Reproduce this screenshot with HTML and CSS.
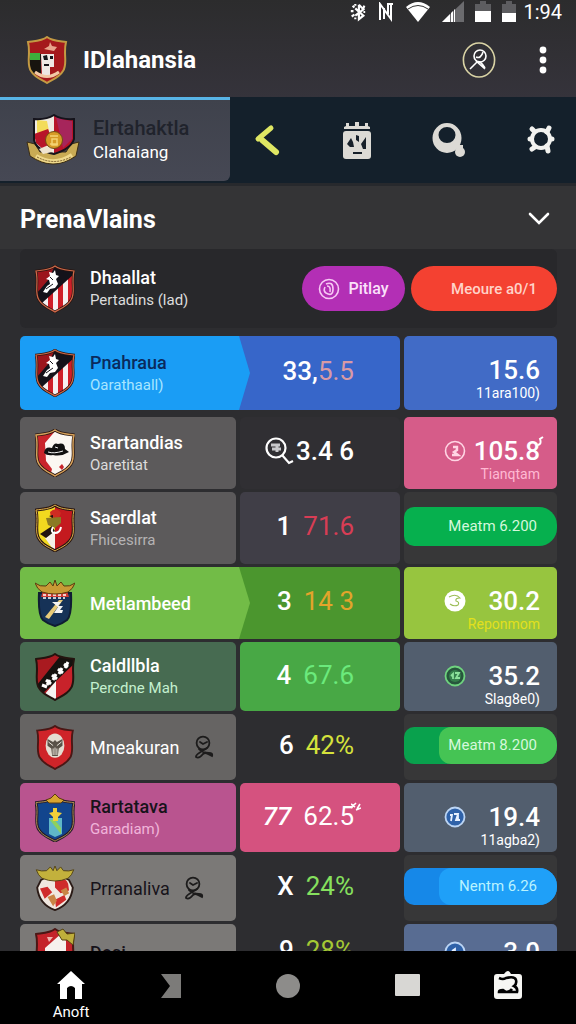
FILE: index.html
```html
<!DOCTYPE html>
<html lang="en">
<head>
    <meta charset="UTF-8">
    <meta name="viewport" content="width=device-width, initial-scale=1.0">
    <title>IDlahansia</title>
    <link rel="stylesheet" href="styles.css">
</head>
<body>
    <!-- Shared shapes -->
    <svg class="defs" aria-hidden="true">
        <defs>
            <path id="shield" d="M20 1 C15 5 8 5 1 6 C4 18 -1 28 4 35 C8 42 16 44 20 47 C24 44 32 42 36 35 C41 28 36 18 39 6 C32 5 25 5 20 1 Z"/>
            <clipPath id="shieldClip"><use href="#shield"/></clipPath>
            <symbol id="person" viewBox="0 0 20 24">
                <g fill="none" stroke="currentColor" stroke-width="1.8" stroke-linecap="round">
                    <circle cx="9" cy="8" r="6.4"/>
                    <path d="M6 7l3 2 4-2M13 13C9 16 1 19 2 22q3 2 7-3 2-2 5 0l4 2q1-3-3-3-6 0-10-4"/>
                </g>
            </symbol>
            <symbol id="striped" viewBox="0 0 40 48">
                <g clip-path="url(#shieldClip)">
                    <path fill="#f6f0f0" d="M0 0h40v48H0z"/>
                    <path fill="#cf1f28" d="M13 20h5v28h-5zM23 14h5v34h-5zM33 8h6v40h-6z"/>
                    <path fill="#14121a" d="M0 0h40v8L7 38H0z"/>
                    <path fill="#9c151c" d="M0 0h20L14 14 2 28z"/>
                    <path fill="#fff" d="M8 27l4-6 3-2-1-4-3-1 4-3-1-4 4 1 2-3 1 5 3 1-3 3 2 5-3 4-5 1-3 4z"/>
                    <path stroke="#14121a" d="M11 24l7-5M15 12l3 3" fill="none"/>
                </g>
                <use href="#shield" fill="none" stroke="#2a1410" stroke-width="2.6"/>
                <use href="#shield" fill="none" stroke="#cf6a4a" stroke-width="1.2"/>
            </symbol>
        </defs>
    </svg>

    <header class="top">
        <div class="status-bar">
            <svg width="18" height="22" viewBox="0 0 20 22" fill="none" stroke="#fff" stroke-width="2.4"><path d="M11 3v16l5-4-9-8m0 8l9-7-5-5M4 4l2 2M2 10h3M3 16l3-2M17 4l-1 3M18 11h-2M7 2v2M7 19v-2"/></svg>
            <svg width="16" height="20" viewBox="0 0 16 20" fill="none" stroke="#fff" stroke-width="2"><path d="M2 18V2l11 15V2M6 17V6M10 12V2l5 0"/></svg>
            <svg width="26" height="22" viewBox="0 0 26 22"><path fill="#fff" d="M1 6Q13-4 25 6L13 21z"/><path fill="none" stroke="#333" stroke-width="1" d="M3 8q10-7 20 0"/></svg>
            <svg width="22" height="22" viewBox="0 0 22 22"><path fill="#6b6b6e" d="M0 21L22 0v21z"/><path fill="#fff" d="M0 21L8 13v8zM9 12l2-2v11H9zM12 9l1-1v13h-1z"/></svg>
            <svg width="16" height="22" viewBox="0 0 16 22"><path fill="#5d5d60" d="M0 3h5V0h6v3h5v18H0z"/><path fill="#fff" d="M0 10h16v11H0z"/></svg>
            <svg width="14" height="22" viewBox="0 0 14 22"><path fill="#5d5d60" d="M0 3h4V0h6v3h4v18H0z"/><path fill="#fff" d="M0 12h14v9H0z"/></svg>
            <span class="clock">1:94</span>
        </div>
        <div class="title-bar">
            <svg class="logo" viewBox="0 0 44 48">
                <g transform="translate(2)">
                    <g clip-path="url(#shieldClip)">
                        <path fill="#a5191c" d="M0 0h40v48H0z"/>
                        <path fill="#17140f" d="M0 18h14v20H0z"/>
                        <path fill="#3fae3c" d="M2 17h11v7H3z"/>
                        <path fill="#eee9e4" d="M14 18h13v13h-4v8h-8z"/>
                        <path fill="#16151a" d="M16 20l4-1 1 5-4 0zM23 20h3v3h-3zM17 28h5v2h-5z"/>
                        <path fill="#e9a58c" d="M17 13l5-3 1-4 2 4 5 1-3 4z"/>
                        <path stroke="#f3c9a5" stroke-width="3" fill="none" d="M8 36q12 9 24 0"/>
                    </g>
                    <use href="#shield" fill="none" stroke="#c39a43" stroke-width="2"/>
                </g>
            </svg>
            <h1>IDlahansia</h1>
            <button class="icon-btn" aria-label="Profile">
                <svg width="34" height="36" viewBox="0 0 34 36" fill="none" stroke="#fff" stroke-width="1.6"><ellipse cx="17" cy="18" rx="15.6" ry="17" stroke="#d9d3a5"/><circle cx="18" cy="14" r="6"/><path d="M14 15q5 2 7-5M8 27l7-7q3-2 8 6M14 19l9 8"/></svg>
            </button>
            <button class="icon-btn more" aria-label="More">
                <svg width="8" height="28" viewBox="0 0 8 28" fill="#fff"><circle cx="4" cy="4" r="3.4"/><circle cx="4" cy="14" r="3.4"/><circle cx="4" cy="24" r="3.4"/></svg>
            </button>
        </div>
    </header>

    <nav class="tabs">
        <a class="tab" href="#">
            <svg class="tab-crest" viewBox="0 0 54 52">
                <path fill="#c9ab54" stroke="#3a2c14" d="M1 28l8 2 5 8 26 0 5-8 8-2-3 14q-23 16-46 0z"/>
                <path fill="#f0ebe2" d="M8 5q12 1 20-4v38Q12 38 8 26z"/>
                <path fill="#f3dc5a" d="M11 6l10 1 2 10-12 3z"/>
                <path fill="#b81429" d="M28 1q8 5 20 4v20q-3 12-20 14zM8 20l14-5 5 12-8 10-9-8z"/>
                <path fill="#a6255b" d="M30 3q7 3 16 4v18l-9 9z"/>
                <path fill="none" stroke="#15131b" stroke-width="2" d="M8 5q12 1 20-4 8 5 20 4v20q-3 10-20 15Q10 36 8 26z"/>
                <path fill="#efe4cf" d="M13 35l12-5 1 8-9 2z"/>
                <circle cx="28" cy="26" r="8.5" fill="#d79b26" stroke="#714b12"/>
                <path fill="none" stroke="#f5d472" stroke-width="1.5" d="M24 22h8M26 25h5v6h-5zM24 30h8"/>
                <path fill="none" stroke="#efd98c" stroke-width="4" d="M10 42q18 11 36-1"/>
                <path fill="none" stroke="#765b2a" stroke-dasharray="2 1" d="M11 43q17 9 34 0"/>
            </svg>
            <span class="tab-text">
                <span class="tab-name">Elrtahaktla</span>
                <span class="tab-sub">Clahaiang</span>
            </span>
        </a>
        <div class="tools">
            <button class="icon-btn" aria-label="Back">
                <svg width="28" height="32" viewBox="0 0 28 32" fill="none" stroke="#dfe763" stroke-width="5" stroke-linecap="round"><path d="M18 4L5 15"/><path d="M9 16l14 12" stroke-width="6"/></svg>
            </button>
            <button class="icon-btn" aria-label="Calendar">
                <svg width="28" height="38" viewBox="0 0 28 38"><path fill="#dcdad5" d="M1 8V6l2-1V2h3v3h6V1h4v4h6V2h3v3l2 1v2z"/><rect y="10" width="28" height="28" rx="3" fill="#dcdad5"/><path fill="#17202a" d="M4 23l4-6 2 4 1 5H7zM13 14l3 1 0 6-3-2zM18 23l5-7v12h-3zM10 31h9v2h-9z"/></svg>
            </button>
            <button class="icon-btn" aria-label="Search">
                <svg width="34" height="36" viewBox="0 0 34 36"><path fill="#dcdad5" fill-rule="evenodd" d="M15 1a14.5 15 0 1 0 0 30a14.5 15 0 1 0 0-30zM15 5a8.500 8 0 1 1 0 16a8.500 8 0 1 1 0-16z"/><path d="M28 23v6" stroke="#dcdad5" stroke-width="6"/><circle cx="28" cy="30" r="5" fill="#dcdad5"/></svg>
            </button>
            <button class="icon-btn" aria-label="Settings">
                <svg width="28" height="32" viewBox="0 0 28 32"><g fill="none" stroke="#f2f2ef"><circle cx="14" cy="15" r="9" stroke-width="4"/><path stroke-width="5" stroke-linecap="round" d="M7 7L5 5M20 8l2-4M24 15h1M20 22l1 5M8 23l-3 2M4 15H3"/></g></svg>
            </button>
        </div>
    </nav>

    <main>
        <div class="section-head">
            <h2>PrenaVlains</h2>
            <button class="icon-btn" aria-label="Collapse">
                <svg width="22" height="14" viewBox="0 0 22 14" fill="none" stroke="#fff" stroke-width="2.600" stroke-linecap="round"><path d="M2 2l9 9 9-9"/></svg>
            </button>
        </div>

        <div class="feature">
            <div class="team">
                <svg class="crest"><use href="#striped"/></svg>
                <div><div class="name">Dhaallat</div><div class="sub">Pertadins (lad)</div></div>
            </div>
            <button class="round purple">
                <svg width="22" height="22" viewBox="0 0 22 22" fill="none" stroke="#f7c9f5" stroke-width="1.600"><circle cx="11" cy="11" r="9.500"/><path d="M8 6q7-3 7 5t-7 4q-3-2-1-6M9 8q4 0 3 6"/></svg>
                Pitlay
            </button>
            <button class="round red">Meoure a0/1</button>
        </div>

        <table class="standings">
            <tbody>
                <tr class="first">
                    <td class="team arrow blue">
                        <svg class="crest"><use href="#striped"/></svg>
                        <div><div class="name navy">Pnahraua</div><div class="sub ice">Oarathaall)</div></div>
                    </td>
                    <td class="score joined royal tight"><span>33,</span><span class="salmon">5.5</span></td>
                    <td class="total royal-light">
                        <div class="line"><b>15.6</b></div>
                        <div class="note">11ara100)</div>
                    </td>
                </tr>
                <tr>
                    <td class="team grey">
                        <svg class="crest" viewBox="0 0 40 48">
                            <g clip-path="url(#shieldClip)">
                                <path fill="#fbf7f2" d="M0 0h40v48H0z"/>
                                <path fill="#c9252b" d="M0 0h22L10 14l1 18 6 8-2 8H0z"/>
                                <path fill="#111" d="M9 24q1-7 8-5 2-6 6-4 7-2 7 5l4 3q-8 5-16 3-6 1-9-2z"/>
                                <path stroke="#f5f5f5" fill="none" d="M13 23q6 2 15-1M20 18l3 1"/>
                                <path fill="#c9252b" d="M24 38l3-3 2 3-2 3z"/>
                            </g>
                            <use href="#shield" fill="none" stroke="#2a1712" stroke-width="3"/>
                            <use href="#shield" fill="none" stroke="#d6a25b" stroke-width="1.500"/>
                        </svg>
                        <div><div class="name">Srartandias</div><div class="sub">Oaretitat</div></div>
                    </td>
                    <td class="score dark tight">
                        <svg width="32" height="32" viewBox="0 0 32 32" fill="none" stroke="#fff" stroke-width="2.200"><circle cx="12" cy="13" r="9.500"/><path d="M18 20l7 8 4-2"/><path stroke-width="3" d="M7 10l9 0M8 14h9M13 10v7" stroke="#c9c9cc"/></svg>
                        <span>3.4 6</span>
                    </td>
                    <td class="total pink">
                        <div class="line">
                            <svg class="badge" viewBox="0 0 22 22" fill="none" stroke="#ffd5e4" stroke-width="1.600"><circle cx="11" cy="11" r="9.500"/><path stroke-width="2.400" d="M9 7h4v3l-3 2 4 3H8"/></svg>
                            <b>105.8<svg class="mark" viewBox="0 0 10 10"><path fill="none" stroke="#fff" stroke-width="2" d="M1 9q4-1 2-6l3-2"/></svg></b>
                        </div>
                        <div class="note rose">Tianqtam</div>
                    </td>
                </tr>
                <tr>
                    <td class="team grey">
                        <svg class="crest" viewBox="0 0 40 48">
                            <g clip-path="url(#shieldClip)">
                                <path fill="#f2d91f" d="M0 0h20v48H0z"/>
                                <path fill="#c41a1f" d="M20 0h20v48H20z"/>
                                <path fill="#f5f0e8" d="M10 34l10-8v22z"/>
                                <path fill="#cf2c22" d="M15 8q6-6 11 1l-2 5h-8z"/>
                                <path fill="#8b7a24" d="M11 14l15-1 0 6-6 5-7-3z"/>
                                <path fill="#21140f" d="M5 30l12-8 3 5-9 7zM14 12l4-1 0 3z"/>
                                <path fill="none" stroke="#fff" stroke-width="2" d="M18 23q-3 6 2 6t6-6"/>
                            </g>
                            <use href="#shield" fill="none" stroke="#2a1712" stroke-width="3"/>
                            <use href="#shield" fill="none" stroke="#e0b14b" stroke-width="1"/>
                        </svg>
                        <div><div class="name">Saerdlat</div><div class="sub muted">Fhicesirra</div></div>
                    </td>
                    <td class="score slate"><span>1</span><span class="crimson">71.6</span></td>
                    <td class="action"><button class="pill green">Meatm 6.200</button></td>
                </tr>
                <tr>
                    <td class="team arrow lime">
                        <svg class="crest" viewBox="0 0 40 48">
                            <path fill="#163257" stroke="#101d33" stroke-width="2" d="M4 14h32q1 22-4 27-5 4-12 6-7-2-12-6-5-5-4-27z"/>
                            <path fill="#cf3a33" d="M8 12h24l2 6H6z"/>
                            <path stroke="#fff" stroke-width="1.500" stroke-dasharray="3 2" d="M8 16h24M8 19h22"/>
                            <path fill="#e8cb79" d="M10 38l14-17 4 0-14 19z"/>
                            <path fill="#f4f4f4" d="M17 23h9l-3 4h5l-3 4h3l-1 3h-8l4-6z"/>
                            <path fill="#c89a35" stroke="#5a3a10" d="M0 4q5 4 11 3l4-4 3 4 2-6 2 6 4-4 3 4q6 1 11-3-2 6-7 9-13 4-26 0-5-3-7-9z"/>
                        </svg>
                        <div class="name">Metlambeed</div>
                    </td>
                    <td class="score joined leaf"><span>3</span><span class="amber">14 3</span></td>
                    <td class="total yellow-green">
                        <div class="line">
                            <svg class="badge" viewBox="0 0 22 22"><circle cx="11" cy="11" r="10.500" fill="#fff"/><path fill="none" stroke="#9bbd55" stroke-width="1.100" d="M5 7q7-4 11 1-5 0-4 3 4 1 2 4-4 2-8-1"/></svg>
                            <b>30.2</b>
                        </div>
                        <div class="note gold">Reponmom</div>
                    </td>
                </tr>
                <tr class="mid">
                    <td class="team moss">
                        <svg class="crest" viewBox="0 0 40 48">
                            <g clip-path="url(#shieldClip)">
                                <path fill="#a91a20" d="M0 0h40v48H0z"/>
                                <path fill="#15120f" d="M26 2h14v10L8 40 2 32z"/>
                                <path fill="#f8f4f2" d="M21 28v20L9 42z"/>
                                <path fill="#c8222a" d="M21 28l19-18v38H21z"/>
                                <path fill="none" stroke="#fff" stroke-width="3" d="M7 32l5 2M11 27l5 4M12 32l3-5M17 22l5 4M18 27l3-6M23 16l5 4M24 21l3-6M29 11l4 3M30 15l3-6"/>
                            </g>
                            <use href="#shield" fill="none" stroke="#24140f" stroke-width="2"/>
                        </svg>
                        <div><div class="name">Caldllbla</div><div class="sub mint">Percdne Mah</div></div>
                    </td>
                    <td class="score emerald"><span>4</span><span class="aqua">67.6</span></td>
                    <td class="total steel">
                        <div class="line">
                            <svg class="badge" viewBox="0 0 22 22"><circle cx="11" cy="11" r="9.500" fill="#27563c" stroke="#6fd37f" stroke-width="1.800"/><circle cx="11" cy="11" r="6" fill="#357f4c"/><path fill="none" stroke="#8be09a" stroke-width="1.800" d="M7 11l2-2v5M11 8h4l-3 5h4"/></svg>
                            <b>35.2</b>
                        </div>
                        <div class="note">Slag8e0)</div>
                    </td>
                </tr>
                <tr class="short">
                    <td class="team stone">
                        <svg class="crest small" viewBox="0 0 40 48">
                            <use href="#shield" fill="#cf2429" stroke="#4a1715" stroke-width="2"/>
                            <ellipse cx="20" cy="22" rx="10" ry="13" fill="#e4ddd2"/>
                            <path fill="#5a5248" d="M12 15l6 3 2-2 2 2 6-3v7l-4 3-1 8h-6l-1-8-4-3z"/>
                            <path stroke="#efe9df" d="M13 18l5 4M27 18l-5 4M18 25v7M20 24v8M22 25v7"/>
                        </svg>
                        <div class="name thin">Mneakuran</div>
                        <svg class="person"><use href="#person"/></svg>
                    </td>
                    <td class="score"><span>6</span><span class="lemon">42%</span></td>
                    <td class="action"><button class="pill split green"><span>Meatm 8.200</span></button></td>
                </tr>
                <tr class="mid">
                    <td class="team magenta">
                        <svg class="crest" viewBox="0 0 40 48">
                            <g transform="translate(0 3) scale(1 .94)">
                                <use href="#shield" fill="#12458d" stroke="#231a2b" stroke-width="3"/>
                                <use href="#shield" fill="none" stroke="#b1914f" stroke-width="1"/>
                            </g>
                            <path fill="#d9a52f" stroke="#5a3a10" d="M11 6l5-2 4-4 4 4 5 2-3 3H14z"/>
                            <path fill="#5fb7c8" d="M14 24h13v16l-7 3-6-3z"/>
                            <path fill="#8ed15c" d="M15 26h5l6 8v6z"/>
                            <path fill="#f0cf39" d="M18 14h4v4l5 1-4 4v4h-5v-4l-4-4 4-1z"/>
                        </svg>
                        <div><div class="name black">Rartatava</div><div class="sub blush">Garadiam)</div></div>
                    </td>
                    <td class="score rose-bg"><span class="slant">77</span><span>62.5<svg class="mark" viewBox="0 0 10 10"><path fill="none" stroke="#fff" stroke-width="1.600" d="M0 3l4 3M0 7l5-5M9 3L6 8M5 9l5-2"/></svg></span></td>
                    <td class="total steel">
                        <div class="line">
                            <svg class="badge" viewBox="0 0 22 22"><circle cx="11" cy="11" r="9.500" fill="#2f62a9" stroke="#bcd5f4" stroke-width="1.800"/><path fill="none" stroke="#e6f0ff" stroke-width="1.800" d="M6 9l2 0-1 6M10 8h4l-2 6h4M14 8v6"/></svg>
                            <b>19.4</b>
                        </div>
                        <div class="note">11agba2)</div>
                    </td>
                </tr>
                <tr class="short">
                    <td class="team ash">
                        <svg class="crest small" viewBox="0 0 40 48">
                            <path fill="#f0e7df" stroke="#2b1b16" stroke-width="2" d="M5 15q15-9 30 0l4 8q-2 18-19 24Q3 41 1 23z"/>
                            <path fill="#cf2b2b" d="M20 14q11-3 14 5l1 7-9 3-6-6zM4 24l8-2 5 6-8 7zM20 36l10-5 2 5-11 8z"/>
                            <path fill="#c98545" d="M12 33l7-3 3 7-4 6zM26 26l6-3 3 6-5 3z"/>
                            <path fill="#c3b13c" stroke="#534313" d="M0 4q6 2 11 1l4-4 3 4 2-5 2 5 4-4 3 4q6 1 11-1-2 6-6 9-14 6-28 0-4-3-6-9z"/>
                        </svg>
                        <div class="name black thin">Prranaliva</div>
                        <svg class="person"><use href="#person"/></svg>
                    </td>
                    <td class="score"><span>X</span><span class="spring">24%</span></td>
                    <td class="action"><button class="pill split azure"><span>Nentm 6.26</span></button></td>
                </tr>
                <tr class="last">
                    <td class="team ash">
                        <svg class="crest" viewBox="0 0 40 48">
                            <g clip-path="url(#shieldClip)">
                                <path fill="#c4232a" d="M0 0h40v48H0z"/>
                                <path fill="#f6f1ee" d="M10 20L27 5l4 8v35H10z"/>
                                <path fill="#f0b4ae" d="M12 9l6 0-4 5z"/>
                            </g>
                            <use href="#shield" fill="none" stroke="#4a1715" stroke-width="2"/>
                            <path fill="#bfae3b" stroke="#534313" d="M22 4l6-3 4 5 8-1-2 12-6-5-5 0z"/>
                        </svg>
                        <div class="name black">Dosi</div>
                    </td>
                    <td class="score"><span>9</span><span class="olive">28%</span></td>
                    <td class="total denim">
                        <div class="line">
                            <svg class="badge" viewBox="0 0 22 22"><circle cx="11" cy="11" r="9.500" fill="#2f62a9" stroke="#bcd5f4" stroke-width="1.800"/><path fill="none" stroke="#e6f0ff" stroke-width="1.800" d="M8 10l3-2v7"/></svg>
                            <b>3.0</b>
                        </div>
                    </td>
                </tr>
            </tbody>
        </table>
    </main>

    <nav class="bottom">
        <a href="#">
            <svg width="28" height="28" viewBox="0 0 28 28"><path fill="#fff" d="M14 0L28 13h-3v15h-7V17q-4-4-8 0v11H3V13H0z"/></svg>
            <span>Anoft</span>
        </a>
        <a href="#" aria-label="Recent"><svg width="20" height="28" viewBox="0 0 20 28"><path fill="#7c7b79" d="M0 3h20v24H0l9-12z"/></svg></a>
        <a href="#" aria-label="Circle"><svg width="24" height="28" viewBox="0 0 24 28"><circle cx="12" cy="15" r="12" fill="#8d8c8a"/></svg></a>
        <a href="#" aria-label="Square"><svg width="25" height="28" viewBox="0 0 25 28"><rect y="3" width="25" height="22" rx="1" fill="#d8d7d4"/></svg></a>
        <a href="#" aria-label="Contacts"><svg width="28" height="28" viewBox="0 0 28 28"><path fill="#f6f6f3" d="M3 3h7q4-6 7 0h8q3 0 3 3v19q0 3-3 3H3q-3 0-3-3V6q0-3 3-3z"/><path fill="none" stroke="#000" stroke-width="2.600" d="M5 7q4 2 7 0 9-2 10 2 1 4-2 6 4 2 3 6H5q0-2 4-2l3 2q4 0 6-3"/></svg></a>
    </nav>
</body>
</html>
```
FILE: styles.css
```css
* {
    box-sizing: border-box;
}

body {
    display: flex;
    flex-direction: column;
    height: 100vh;
    margin: 0;
    overflow: hidden;
    background-color: #2d2d30;
    color: #fff;
    font-family: Roboto, 'Liberation Sans', sans-serif;
}

h1, h2 {
    margin: 0;
}

button {
    border: none;
    color: inherit;
    font-family: inherit;
    cursor: pointer;
}

a {
    color: inherit;
    text-decoration: none;
}

svg {
    display: block;
    flex: none;
}

.defs {
    position: absolute;
    width: 0;
    height: 0;
}

.icon-btn {
    display: flex;
    padding: 0;
    background: none;
}

/* Header */
.top {
    flex: none;
    background: linear-gradient(#2c2c2d, #35333b);
}

.status-bar {
    display: flex;
    justify-content: flex-end;
    align-items: center;
    gap: 11px;
    height: 24px;
    padding-right: 14px;
}

.clock {
    margin-left: -4px;
    font-size: 20px;
}

.title-bar {
    display: flex;
    align-items: center;
    height: 73px;
    padding: 0 29px 2px 25px;
}

.logo {
    width: 44px;
    height: 48px;
}

h1 {
    flex: 1;
    margin-left: 14px;
    font-size: 24px;
    font-weight: 700;
}

.more {
    margin-left: 43px;
}

/* Tabs */
.tabs {
    display: flex;
    flex: none;
    align-items: flex-start;
    height: 89px;
    background-color: #14202b;
    border-bottom: 3px solid #27292d;
}

.tab {
    display: flex;
    align-items: center;
    gap: 13px;
    width: 40%;
    height: 84px;
    padding: 0 0 2px 26px;
    border-top: 3px solid #58b4e6;
    border-radius: 0 0 6px 0;
    background: linear-gradient(#3f424c, #464854);
}

.tab-crest {
    width: 54px;
    height: 52px;
}

.tab-text span {
    display: block;
    line-height: 24px;
}

.tab-name {
    color: #20232c;
    font-size: 20px;
    font-weight: 500;
}

.tab-sub {
    font-size: 17px;
}

.tools {
    display: flex;
    flex: 1;
    justify-content: space-between;
    align-items: center;
    height: 86px;
    padding: 0 21px 0 23px;
}

/* Content */
main {
    flex: 1;
    overflow: hidden;
}

.section-head {
    display: flex;
    justify-content: space-between;
    align-items: center;
    height: 63px;
    padding: 3px 26px 0 20px;
    background-color: #343436;
}

h2 {
    font-size: 25px;
    font-weight: 700;
}

.feature {
    display: flex;
    align-items: center;
    gap: 6px;
    height: 79px;
    margin: 0 19px 8px 20px;
    border-radius: 6px;
    background-color: #28282b;
}

.feature .team {
    flex: 1;
}

.round {
    display: flex;
    align-items: center;
    justify-content: center;
    gap: 8px;
    height: 45px;
    border-radius: 23px;
    font-size: 16px;
    font-weight: 500;
}

.purple {
    width: 103px;
    background-color: #b32fb5;
    color: #fbe0fa;
}

.red {
    justify-content: flex-end;
    width: 146px;
    padding-right: 20px;
    background-color: #f44131;
    color: #ffd3c9;
    font-size: 15px;
}

.standings,
.standings tbody {
    display: block;
}

.standings {
    padding: 0 19px 0 20px;
}

.standings tr {
    display: grid;
    grid-template-columns: 216fr 160fr 153fr;
    gap: 4px;
    height: 72px;
    margin-bottom: 3px;
}

.standings tr.first {
    height: 74px;
    margin-bottom: 7px;
}

.standings tr.mid {
    height: 69px;
}

.standings tr.short {
    height: 66px;
}

.standings tr.last {
    height: 56px;
}

.standings td {
    padding: 0;
    border-radius: 5px;
}

.team {
    position: relative;
    display: flex;
    align-items: center;
}

.crest {
    width: 40px;
    height: 48px;
    margin: 0 15px;
}

.crest.small {
    height: 45px;
}

.name {
    font-size: 18px;
    font-weight: 500;
    line-height: 23px;
}

.name.thin {
    font-weight: 400;
}

.sub {
    color: #dcdcdc;
    font-size: 15px;
    line-height: 22px;
}

.person {
    width: 20px;
    height: 24px;
    margin-left: 14px;
    color: #1c1b1b;
}

/* Pointed end over the score cell */
.standings .arrow {
    border-radius: 5px 0 0 5px;
}

.arrow::after {
    content: '';
    position: absolute;
    top: 0;
    bottom: 0;
    left: 100%;
    width: 14px;
    background-color: inherit;
    clip-path: polygon(0 0, 3px 0, 100% 50%, 3px 100%, 0 100%);
}

.score {
    display: flex;
    justify-content: flex-end;
    align-items: center;
    gap: 12px;
    font-size: 26px;
    font-weight: 500;
}

.standings .score {
    padding: 0 46px 4px 0;
}

.standings .joined {
    margin-left: -4px;
    border-radius: 0 5px 5px 0;
}

.standings .tight {
    gap: 0;
}

.score span {
    position: relative;
}

.score span + span {
    font-weight: 400;
}

.slant {
    font-style: italic;
}

.mark {
    position: absolute;
    top: 0;
    left: 95%;
    width: 10px;
    height: 10px;
}

.standings .total {
    padding: 21px 17px 0 40px;
}

.standings .last .total {
    padding-top: 15px;
}

.line {
    display: flex;
    justify-content: space-between;
    align-items: center;
    height: 26px;
}

.line b {
    position: relative;
    margin-left: auto;
    font-size: 26px;
    font-weight: 500;
}

.badge {
    width: 22px;
    height: 22px;
}

.note {
    font-size: 14px;
    line-height: 21px;
    text-align: right;
}

.action {
    display: flex;
    align-items: center;
    background-color: #373738;
}

.standings .action {
    padding-bottom: 4px;
}

.pill {
    width: 100%;
    height: 39px;
    padding: 0 20px 0 0;
    border-radius: 10px 18px 18px 10px;
    color: #d5f8dc;
    font-size: 15px;
    text-align: right;
}

.pill.split {
    display: flex;
    height: 37px;
    padding: 0 0 0 35px;
}

.pill.split span {
    flex: 1;
    padding-right: 20px;
    border-radius: 12px 18px 18px 12px;
    line-height: 37px;
}

.pill.green {
    background-color: #06b04e;
}

.pill.split.green {
    background-color: #09a14d;
}

.pill.green span {
    background-color: #45c454;
}

.pill.azure {
    background-color: #1688e8;
    color: #b9f3ff;
}

.pill.azure span {
    background-color: #1fa0f8;
}

/* Cell colours */
.blue { background-color: #1a9df5; }
.royal { background-color: #3766c9; }
.royal-light { background-color: #416bc6; }
.grey { background-color: #5c5a5b; }
.dark { background-color: #302f33; }
.slate { background-color: #403e47; }
.pink { background-color: #d65c89; }
.lime { background-color: #72bc47; }
.leaf { background-color: #4b962e; }
.yellow-green { background-color: #97c53f; }
.moss { background-color: #476b51; }
.emerald { background-color: #48a845; }
.steel { background-color: #525e6e; }
.stone { background-color: #666463; }
.magenta { background-color: #b9548f; }
.rose-bg { background-color: #d5527f; }
.ash { background-color: #7b7977; }
.denim { background-color: #586c92; }

/* Text colours */
.navy { color: #0a2a5c; }
.ice { color: #a8e6ff; }
.salmon { color: #d99aa5; }
.rose { color: #ffb9d3; }
.muted { color: #b5b3b4; }
.crimson { color: #d83d55; }
.amber { color: #e3a42b; }
.gold { color: #e2e01c; }
.mint { color: #c4f0cf; }
.aqua { color: #6bea7c; }
.lemon { color: #d5e23c; }
.black { color: #17131a; }
.blush { color: #f0b4da; }
.spring { color: #86e05e; }
.olive { color: #a5c934; }

/* Bottom navigation */
.bottom {
    display: grid;
    flex: none;
    grid-template-columns: 100fr 100fr 134fr 104fr 98fr;
    height: 73px;
    padding: 20px 19px 0 21px;
    background-color: #000;
}

.bottom a {
    display: flex;
    flex-direction: column;
    align-items: center;
    gap: 4px;
    font-size: 15px;
}
```
